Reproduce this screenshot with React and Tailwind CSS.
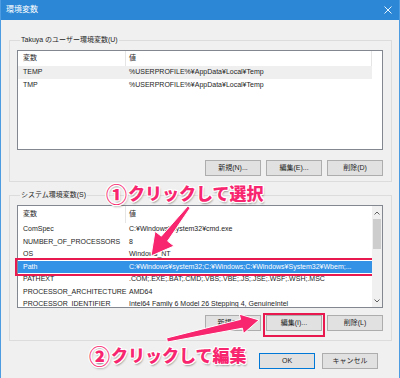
import React from "react";

const userVars = [
  ["TEMP", "%USERPROFILE%¥AppData¥Local¥Temp"],
  ["TMP", "%USERPROFILE%¥AppData¥Local¥Temp"],
];

const systemVars = [
  ["ComSpec", "C:¥Windows¥system32¥cmd.exe"],
  ["NUMBER_OF_PROCESSORS", "8"],
  ["OS", "Windows_NT"],
  ["Path", "C:¥Windows¥system32;C:¥Windows;C:¥Windows¥System32¥Wbem;..."],
  ["PATHEXT", ".COM;.EXE;.BAT;.CMD;.VBS;.VBE;.JS;.JSE;.WSF;.WSH;.MSC"],
  ["PROCESSOR_ARCHITECTURE", "AMD64"],
  ["PROCESSOR_IDENTIFIER", "Intel64 Family 6 Model 26 Stepping 4, GenuineIntel"],
];

function arrowPoints(x1, y1, x2, y2, headLen, headHalf, neckHalf, tailHalf) {
  const dx = x2 - x1;
  const dy = y2 - y1;
  const len = Math.hypot(dx, dy);
  const ux = dx / len;
  const uy = dy / len;
  const nx = -uy;
  const ny = ux;
  const bx = x2 - ux * headLen;
  const by = y2 - uy * headLen;
  const p = (x, y) => `${x.toFixed(1)},${y.toFixed(1)}`;
  return [
    p(x1 + nx * tailHalf, y1 + ny * tailHalf),
    p(bx + nx * neckHalf, by + ny * neckHalf),
    p(bx + nx * headHalf, by + ny * headHalf),
    p(x2, y2),
    p(bx - nx * headHalf, by - ny * headHalf),
    p(bx - nx * neckHalf, by - ny * neckHalf),
    p(x1 - nx * tailHalf, y1 - ny * tailHalf),
  ].join(" ");
}

function Button({ children, primary }) {
  return (
    <div
      className={`w-[56px] h-[16px] flex items-center justify-center bg-[#e1e1e1] border ${
        primary ? "border-[#0078d7]" : "border-[#adadad]"
      }`}
    >
      {children}
    </div>
  );
}

function Chevron({ up }) {
  return (
    <svg width="6" height="4" viewBox="0 0 6 4">
      <path d={up ? "M0.5 3.5 L3 1 L5.5 3.5" : "M0.5 0.5 L3 3 L5.5 0.5"} fill="none" stroke="#606060" strokeWidth="1" />
    </svg>
  );
}

export default function App() {
  const annot =
    "absolute flex items-center text-[17px] leading-[20px] font-black text-[#f7266f] font-['Noto_Sans_CJK_JP',sans-serif] [text-shadow:-1px_-1px_0_#fff,1px_-1px_0_#fff,-1px_1px_0_#fff,1px_1px_0_#fff,0_-1px_0_#fff,0_1px_0_#fff,-1px_0_0_#fff,1px_0_0_#fff,1px_2px_2px_rgba(0,0,0,0.4)]";

  return (
    <div className="w-[400px] h-[378px] relative overflow-hidden bg-[#f0f0f0] border-x border-[#4d9be0] font-['Liberation_Sans','Noto_Sans_CJK_JP',sans-serif] text-[7px] text-[#1e1e1e]">
      {/* title bar */}
      <div className="h-[20px] bg-[#2c88d6] flex items-center justify-between pl-[5px] pr-[7px] text-white text-[8px]">
        <span>環境変数</span>
        <svg width="8" height="8" viewBox="0 0 8 8">
          <path d="M0.5 0.5 L7.5 7.5 M7.5 0.5 L0.5 7.5" stroke="#fff" strokeWidth="0.9" />
        </svg>
      </div>

      <div className="pl-[8px] pr-[7px]">
        {/* user variables */}
        <fieldset className="mt-[15px] border border-[#dcdcdc] pl-[7px] pr-[8px] pb-[5px]">
          <legend className="ml-[3px] px-[1px] leading-[10px]">Takuya のユーザー環境変数(U)</legend>
          <div className="mt-[5px] h-[100px] bg-white border border-[#828790] flex">
            <div className="flex-1 flex flex-col">
              <div className="h-[15px] flex items-center">
                <div className="w-[108px] h-full flex items-center pl-[5px] border-r border-[#e5e5e5]">変数</div>
                <div className="flex-1 h-full flex items-center pl-[3px] border-r border-[#e5e5e5]">値</div>
              </div>
              {userVars.map(([k, v], i) => (
                <div key={k} className={`h-[13px] flex items-center ${i === 0 ? "bg-[#efefef]" : ""}`}>
                  <div className="w-[108px] pl-[5px]">{k}</div>
                  <div className="flex-1 pl-[3px] whitespace-nowrap">{v}</div>
                </div>
              ))}
            </div>
            <div className="w-[10px]" />
          </div>
          <div className="mt-[10px] flex justify-end gap-[5px]">
            <Button>新規(N)...</Button>
            <Button>編集(E)...</Button>
            <Button>削除(D)</Button>
          </div>
        </fieldset>

        {/* system variables */}
        <fieldset className="mt-[8px] border border-[#dcdcdc] pl-[7px] pr-[8px] pb-[9px]">
          <legend className="ml-[3px] px-[1px] leading-[10px]">システム環境変数(S)</legend>
          <div className="mt-[5px] h-[103px] bg-white border border-[#828790] flex">
            <div className="flex-1 flex flex-col">
              <div className="h-[17px] shrink-0 flex items-center">
                <div className="w-[108px] h-full flex items-center pl-[5px] border-r border-[#e5e5e5]">変数</div>
                <div className="flex-1 pl-[3px]">値</div>
              </div>
              {systemVars.map(([k, v], i) => {
                const sel = k === "Path";
                const last = i === systemVars.length - 1;
                return (
                  <div
                    key={k}
                    className={`shrink-0 flex leading-[12.5px] whitespace-nowrap ${
                      last ? "h-[9px] overflow-hidden" : "h-[12.5px]"
                    } ${sel ? "bg-[#3392e6] text-white outline-2 outline-[#e8194f] outline-offset-1" : ""}`}
                  >
                    <div className="w-[108px] pl-[5px]">{k}</div>
                    <div className="flex-1 pl-[3px] overflow-hidden">{v}</div>
                  </div>
                );
              })}
            </div>
            <div className="w-[10px] bg-[#f0f0f0] flex flex-col">
              <div className="h-[13px] flex items-center justify-center">
                <Chevron up />
              </div>
              <div className="mx-[1px] h-[30px] bg-[#cdcdcd]" />
              <div className="flex-1" />
              <div className="h-[13px] flex items-center justify-center">
                <Chevron />
              </div>
            </div>
          </div>
          <div className="mt-[7px] flex justify-end gap-[5px]">
            <Button>新規(W)...</Button>
            <div className="relative">
              <Button>編集(I)...</Button>
              <div className="absolute -top-[2px] -bottom-[6px] -left-[3px] -right-[3px] border-2 border-[#e8194f]" />
            </div>
            <Button>削除(L)</Button>
          </div>
        </fieldset>

        <div className="mt-[12px] mr-[14px] flex justify-end gap-[7px]">
          <Button primary>OK</Button>
          <Button>キャンセル</Button>
        </div>
      </div>

      {/* annotations */}
      <svg className="absolute inset-0 pointer-events-none" width="400" height="378" viewBox="0 0 400 378">
        <polygon points={arrowPoints(188, 207, 150, 256, 22, 12, 4, 1.5)} fill="#f7266f" stroke="#fff" strokeWidth="1" strokeLinejoin="round" />
        <polygon points={arrowPoints(166, 340, 258, 320, 18, 10, 4.5, 2)} fill="#f7266f" stroke="#fff" strokeWidth="1" strokeLinejoin="round" />
      </svg>
      <div className={`${annot} left-[105px] top-[183px]`}>
        <span className="text-[21px] mr-[1px]">①</span>クリックして選択
      </div>
      <div className={`${annot} left-[88px] top-[345px]`}>
        <span className="text-[21px] mr-[1px]">②</span>クリックして編集
      </div>
    </div>
  );
}
